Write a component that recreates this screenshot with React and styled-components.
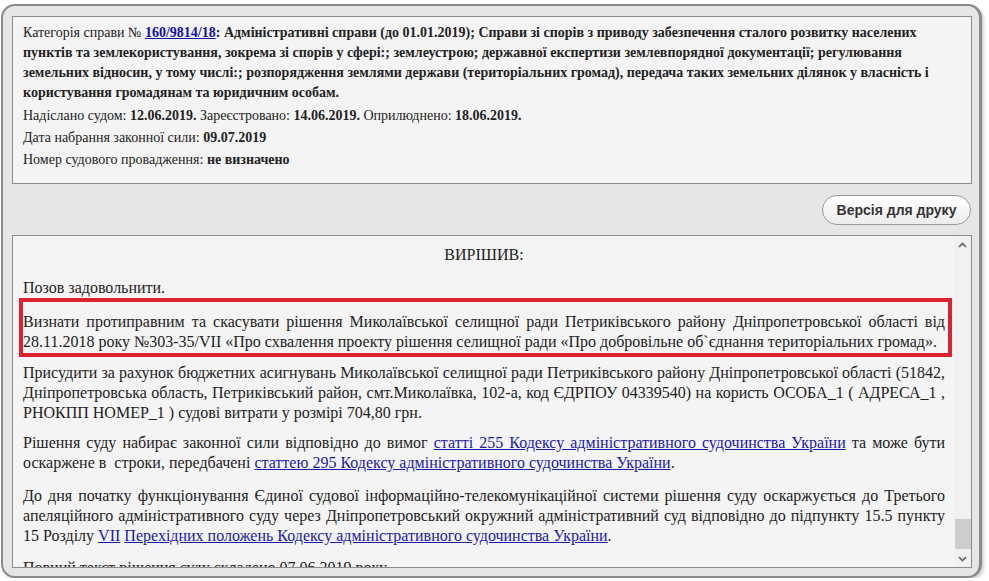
import styled, { createGlobalStyle } from 'styled-components'

const GlobalStyle = createGlobalStyle`
  body {
    margin: 0;
    background: #ffffff;
    font-family: "Liberation Serif", "Times New Roman", serif;
    color: #222;
  }
`

const Panel = styled.div`
  margin: 4px 0 0 1px;
  width: 960px;
  padding: 10px 7px 8px 9px;
  background-color: #e6e6e6;
  border: 2px solid #8a8a8a;
  border-right-width: 3px;
  border-radius: 14px;
  box-shadow: 2px 2px 3px rgba(0, 0, 0, 0.18);
  display: flex;
  flex-direction: column;
`

const InfoBox = styled.div`
  background-color: #f4f4f4;
  border: 1px solid #8c8c8c;
  padding: 6px 10px 12px 10px;
  font-size: 14px;
`

const InfoTitle = styled.div`
  line-height: 20px;
  margin-bottom: 2px;
  b {
    font-weight: bold;
  }
`

const InfoLine = styled.div`
  line-height: 22px;
`

const CaseLink = styled.a`
  color: #1010a8;
  font-weight: bold;
  text-decoration: underline;
`

const Toolbar = styled.div`
  display: flex;
  justify-content: flex-end;
  padding: 11px 1px 10px 0;
`

const PrintButton = styled.button`
  width: 149px;
  height: 30px;
  border: 1px solid #9a9a9a;
  border-radius: 15px;
  background: linear-gradient(#ffffff, #ececec);
  font-family: "Liberation Sans", Arial, sans-serif;
  font-weight: bold;
  font-size: 14px;
  color: #333;
  cursor: pointer;
`

const DecisionBox = styled.div`
  height: 331px;
  background-color: #f4f4f4;
  border: 1px solid #8c8c8c;
  display: flex;
  overflow: hidden;
`

const DecisionText = styled.div`
  flex: 1;
  padding: 9px 9px 0 10px;
  font-size: 16px;
  line-height: 20px;
  overflow: hidden;
`

const Heading = styled.div`
  text-align: center;
`

const Para = styled.p`
  margin: ${(p) => p.$top || 0}px 0 0 0;
  text-align: justify;

  a {
    color: #1a1aa8;
    text-decoration: underline;
  }
`

const Highlight = styled.div`
  margin: 0 -7px 0 -4px;
  padding: 10px 3px 1px 0;
  border: 4px solid #dc2230;
`

const Scrollbar = styled.div`
  width: 17px;
  display: flex;
  flex-direction: column;
  align-items: center;
  background-color: #f1f1f1;
`

const Arrow = styled.div`
  height: 17px;
  display: flex;
  align-items: center;
  justify-content: center;
`

const Track = styled.div`
  flex: 1;
  width: 100%;
  display: flex;
  flex-direction: column;
  justify-content: flex-end;
  padding-bottom: 1px;
`

const Thumb = styled.div`
  height: 30px;
  margin: 0 0 0 1px;
  background-color: #cdcdcd;
`

const Chevron = ({ down }) => (
  <svg width="9" height="6" viewBox="0 0 9 6">
    <polyline
      points={down ? '1,1 4.5,4.5 8,1' : '1,5 4.5,1.5 8,5'}
      fill="none"
      stroke="#606060"
      strokeWidth="1.6"
    />
  </svg>
)

const App = () => {
  return (
    <>
      <GlobalStyle />
      <Panel>
        <InfoBox>
          <InfoTitle>
            Категорія справи № <CaseLink href="#">160/9814/18</CaseLink>
            <b>
              : Адміністративні справи (до 01.01.2019); Справи зі спорів з приводу
              забезпечення сталого розвитку населених пунктів та землекористування,
              зокрема зі спорів у сфері:; землеустрою; державної експертизи
              землевпорядної документації; регулювання земельних відносин, у тому
              числі:; розпорядження землями держави (територіальних громад),
              передача таких земельних ділянок у власність і користування громадянам
              та юридичним особам.
            </b>
          </InfoTitle>
          <InfoLine>
            Надіслано судом: <b>12.06.2019.</b> Зареєстровано: <b>14.06.2019.</b>{' '}
            Оприлюднено: <b>18.06.2019.</b>
          </InfoLine>
          <InfoLine>
            Дата набрання законної сили: <b>09.07.2019</b>
          </InfoLine>
          <InfoLine>
            Номер судового провадження: <b>не визначено</b>
          </InfoLine>
        </InfoBox>

        <Toolbar>
          <PrintButton>Версія для друку</PrintButton>
        </Toolbar>

        <DecisionBox>
          <DecisionText>
            <Heading>ВИРІШИВ:</Heading>
            <Para $top={13}>Позов задовольнити.</Para>
            <Highlight>
              <Para>
                Визнати протиправним та скасувати рішення Миколаївської селищної ради
                Петриківського району Дніпропетровської області від 28.11.2018 року
                №303-35/VII «Про схвалення проекту рішення селищної ради «Про
                добровільне об`єднання територіальних громад».
              </Para>
            </Highlight>
            <Para $top={6}>
              Присудити за рахунок бюджетних асигнувань Миколаївської селищної ради
              Петриківського району Дніпропетровської області (51842,
              Дніпропетровська область, Петриківський район, смт.Миколаївка, 102-а,
              код ЄДРПОУ 04339540) на користь ОСОБА_1 ( АДРЕСА_1 , РНОКПП НОМЕР_1 )
              судові витрати у розмірі 704,80 грн.
            </Para>
            <Para $top={10}>
              Рішення суду набирає законної сили відповідно до вимог{' '}
              <a href="#">статті 255 Кодексу адміністративного судочинства України</a>{' '}
              та може бути оскаржене в&nbsp; строки, передбачені{' '}
              <a href="#">статтею 295 Кодексу адміністративного судочинства України</a>.
            </Para>
            <Para $top={13}>
              До дня початку функціонування Єдиної судової інформаційно-телекомунікаційної
              системи рішення суду оскаржується до Третього апеляційного
              адміністративного суду через Дніпропетровський окружний адміністративний
              суд відповідно до підпункту 15.5 пункту 15 Розділу <a href="#">VII</a>{' '}
              <a href="#">Перехідних положень Кодексу адміністративного судочинства України</a>.
            </Para>
            <Para $top={12}>Повний текст рішення суду складено 07.06.2019 року.</Para>
          </DecisionText>
          <Scrollbar>
            <Arrow>
              <Chevron />
            </Arrow>
            <Track>
              <Thumb />
            </Track>
            <Arrow>
              <Chevron down />
            </Arrow>
          </Scrollbar>
        </DecisionBox>
      </Panel>
    </>
  )
}

export default App
